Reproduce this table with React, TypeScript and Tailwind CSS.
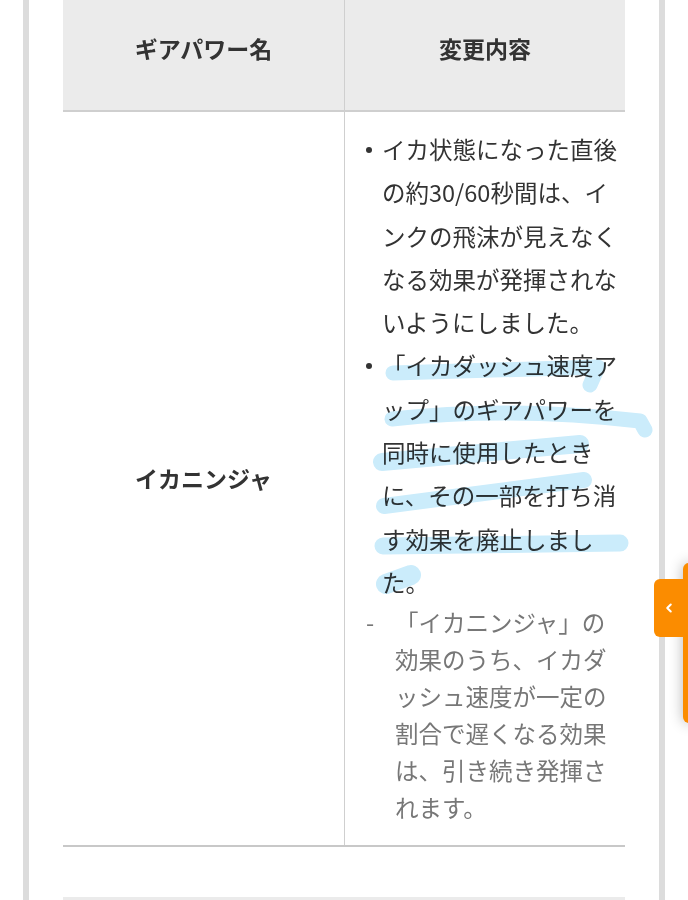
import { ChevronLeft } from "lucide-react"

const font = { fontFamily: '"Noto Sans CJK JP", "Noto Sans", sans-serif' }

const mainLines1 = [
  "イカ状態になった直後",
  "の約30/60秒間は、イ",
  "ンクの飛沫が見えなく",
  "なる効果が発揮されな",
  "いようにしました。",
]

const mainLines2 = [
  "「イカダッシュ速度ア",
  "ップ」のギアパワーを",
  "同時に使用したとき",
  "に、その一部を打ち消",
  "す効果を廃止しまし",
  "た。",
]

const noteLines = [
  "「イカニンジャ」の",
  "効果のうち、イカダ",
  "ッシュ速度が一定の",
  "割合で遅くなる効果",
  "は、引き続き発揮さ",
  "れます。",
]

function Lines({ lines }: { lines: string[] }) {
  return (
    <>
      {lines.map((l, i) => (
        <span key={i} className="block whitespace-nowrap">
          {l}
        </span>
      ))}
    </>
  )
}

function Bullet({ lines }: { lines: string[] }) {
  return (
    <li className="relative">
      <span className="absolute left-[-16px] top-[19px] h-[6px] w-[6px] rounded-full bg-[#333]" />
      <Lines lines={lines} />
    </li>
  )
}

export default function App() {
  return (
    <div className="relative h-[900px] w-[688px] overflow-hidden bg-white" style={font}>
      <div className="ml-[23px] h-[900px] w-[642px] border-x-[6px] border-[#dcdcdc] px-[34px]">
        {/* header row */}
        <div className="grid h-[112px] grid-cols-[282px_280px] border-b-2 border-[#cfcfcf] bg-[#ebebeb] text-[23px] font-bold text-[#333]">
          <div className="border-r border-[#cfcfcf] pt-[31px] text-center leading-[34px]">ギアパワー名</div>
          <div className="pt-[31px] text-center leading-[34px]">変更内容</div>
        </div>

        {/* body row */}
        <div className="grid h-[735px] grid-cols-[282px_280px] border-b-2 border-[#c8c8c8]">
          <div className="flex items-center justify-center border-r border-[#cfcfcf] text-[23px] font-bold text-[#333]">
            イカニンジャ
          </div>
          <div className="pt-[16px] pl-[37px] text-[23.5px]">
            <ul className="leading-[43.3px] text-[#333]">
              <Bullet lines={mainLines1} />
              <Bullet lines={mainLines2} />
            </ul>
            <div className="relative pl-[13px] leading-[37px] text-[#777]">
              <span className="absolute left-[-16px] top-0">-</span>
              <Lines lines={noteLines} />
            </div>
          </div>
        </div>

        {/* next table header */}
        <div className="mt-[50px] h-[40px] bg-[#ebebeb]" />
      </div>

      {/* marker highlight */}
      <svg
        className="pointer-events-none absolute left-0 top-0 mix-blend-multiply"
        width="688"
        height="900"
        viewBox="0 0 688 900"
        fill="none"
        stroke="#cbecfb"
        strokeLinecap="round"
        strokeLinejoin="round"
      >
        <path d="M393 373 L598 367 L590 385" strokeWidth="15" />
        <path d="M392 419 Q510 406 640 421 L645 430" strokeWidth="15" />
        <path d="M382 462 L580 444" strokeWidth="18" />
        <path d="M384 506 L584 480" strokeWidth="16" />
        <path d="M383 546 L620 543" strokeWidth="17" />
        <path d="M386 584 L411 575" strokeWidth="20" />
      </svg>

      {/* side tab */}
      <div className="absolute left-[683px] top-[563px] h-[160px] w-[12px] rounded-l-md bg-[#fb8c00] shadow-[0_0_14px_rgba(0,0,0,0.3)]" />
      <div className="absolute left-[654px] top-[579px] flex h-[58px] w-[30px] items-center justify-center rounded-l-md bg-[#fb8c00]">
        <ChevronLeft className="h-[14px] w-[14px] text-white" strokeWidth={3.5} />
      </div>
    </div>
  )
}
